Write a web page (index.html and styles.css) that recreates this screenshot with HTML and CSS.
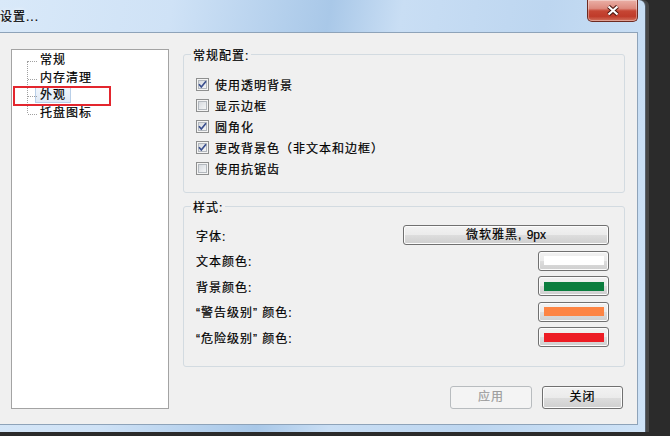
FILE: index.html
```html
<!DOCTYPE html>
<html lang="zh-CN">
<head>
<meta charset="utf-8">
<title>设置...</title>
<link rel="stylesheet" href="styles.css">
</head>
<body>
<div class="window">
  <div class="titlebar">
    <span class="title">设置...</span>
    <button class="close" aria-label="关闭">
      <svg width="14" height="11" viewBox="0 0 14 11">
        <path d="M2.5 1.5 L11.5 9.5 M11.5 1.5 L2.5 9.5" stroke="#4a1710" stroke-width="4.2" fill="none"/>
        <path d="M2.5 1.5 L11.5 9.5 M11.5 1.5 L2.5 9.5" stroke="#ffffff" stroke-width="2.2" fill="none"/>
      </svg>
    </button>
  </div>
  <div class="client">
    <div class="tree">
      <ul class="tree-list">
        <li>常规</li>
        <li>内存清理</li>
        <li><span class="selected">外观</span></li>
        <li>托盘图标</li>
      </ul>
      <div class="annotation"></div>
    </div>
    <div class="panel">
      <fieldset class="group group-general">
        <legend>常规配置:</legend>
        <div class="check"><span class="cb"><svg class="tick" width="11" height="11" viewBox="0 0 11 11"><path d="M2 5.3 L4.3 8 L9 2.3" stroke="#3a4f8e" stroke-width="1.7" fill="none"/></svg></span>使用透明背景</div>
        <div class="check"><span class="cb"></span>显示边框</div>
        <div class="check"><span class="cb"><svg class="tick" width="11" height="11" viewBox="0 0 11 11"><path d="M2 5.3 L4.3 8 L9 2.3" stroke="#3a4f8e" stroke-width="1.7" fill="none"/></svg></span>圆角化</div>
        <div class="check"><span class="cb"><svg class="tick" width="11" height="11" viewBox="0 0 11 11"><path d="M2 5.3 L4.3 8 L9 2.3" stroke="#3a4f8e" stroke-width="1.7" fill="none"/></svg></span>更改背景色（非文本和边框）</div>
        <div class="check"><span class="cb"></span>使用抗锯齿</div>
      </fieldset>
      <fieldset class="group group-style">
        <legend>样式:</legend>
        <div class="row"><span>字体:</span><button class="btn font-btn">微软雅黑, <span class="latin">9px</span></button></div>
        <div class="row"><span>文本颜色:</span><button class="btn color-btn"><span class="swatch white"></span></button></div>
        <div class="row"><span>背景颜色:</span><button class="btn color-btn"><span class="swatch green"></span></button></div>
        <div class="row"><span>“警告级别” 颜色:</span><button class="btn color-btn"><span class="swatch orange"></span></button></div>
        <div class="row"><span>“危险级别” 颜色:</span><button class="btn color-btn"><span class="swatch red"></span></button></div>
      </fieldset>
      <div class="actions">
        <button class="btn action apply" disabled>应用</button>
        <button class="btn action close-btn">关闭</button>
      </div>
    </div>
  </div>
</div>
</body>
</html>
```
FILE: styles.css
```css
html, body {
  margin: 0;
  padding: 0;
}

body {
  width: 670px;
  height: 436px;
  overflow: hidden;
  background: #2b2b2b;
  font-family: "Liberation Sans", "Noto Sans CJK SC", sans-serif;
  font-size: 12px;
  letter-spacing: 1px;
  color: #000;
  -webkit-text-stroke: 0.2px currentColor;
}

.window {
  width: 645px;
  height: 432px;
  display: flex;
  flex-direction: column;
  background: linear-gradient(100deg, #d9e9f9 0%, #cfe2f6 24%, #b3cfec 40%, #a9c8e8 46%, #c9def4 56%, #bdd6f0 76%, #cfe3f7 100%);
  border-top-right-radius: 6px;
  box-shadow: 1px 0 0 #56606c, 4px 0 0 #474747;
}

.titlebar {
  flex: none;
  height: 32px;
  display: flex;
  align-items: flex-start;
}

.title {
  margin: 10px 0 0 0;
  line-height: 14px;
  text-shadow: 0 0 5px rgba(255, 255, 255, 0.8);
}

.close {
  margin-left: auto;
  margin-right: 7px;
  width: 51px;
  height: 22px;
  padding: 0;
  border: 1px solid #6d2a21;
  border-top: none;
  border-radius: 0 0 5px 5px;
  background: linear-gradient(#eab0a6 0%, #dd8a7e 40%, #c64634 52%, #bf3b2a 78%, #d2735f 100%);
  box-shadow: inset 0 0 0 1px rgba(255, 255, 255, 0.35);
  display: flex;
  align-items: center;
  justify-content: center;
}

.close svg {
  display: block;
}

.client {
  flex: none;
  height: 393px;
  margin-right: 7px;
  box-sizing: border-box;
  background: #f0f0f0;
  border: 1px solid #8ea3b9;
  border-left: none;
  display: flex;
  align-items: flex-start;
}

/* tree view */
.tree {
  position: relative;
  flex: none;
  margin: 16px 0 0 11px;
  width: 158px;
  height: 360px;
  box-sizing: border-box;
  border: 1px solid #a3a3a3;
  background: #fff;
}

.tree-list {
  position: relative;
  list-style: none;
  margin: 0;
  padding: 2px 0 0;
}

.tree-list::before {
  content: "";
  position: absolute;
  left: 15px;
  top: 11px;
  height: 52px;
  border-left: 1px dotted #a0a0a0;
}

.tree-list li {
  position: relative;
  height: 17.5px;
  line-height: 17.5px;
  padding-left: 28px;
}

.tree-list li::before {
  content: "";
  position: absolute;
  left: 16px;
  top: 9px;
  width: 9px;
  border-top: 1px dotted #a0a0a0;
}

.selected {
  display: inline-block;
  margin-left: -5px;
  padding: 0 4px;
  line-height: 14px;
  border: 1px solid #b9cfe8;
  background: linear-gradient(#f1f6fc, #dfe9f6);
}

.annotation {
  position: absolute;
  left: 1px;
  top: 36px;
  width: 98px;
  height: 20px;
  box-sizing: border-box;
  border: 2px solid #e3262e;
}

/* right panel */
.panel {
  flex: none;
  width: 442px;
  margin: 13px 0 0 14px;
  display: flex;
  flex-direction: column;
}

.group {
  margin: 0;
  min-width: 0;
  box-sizing: border-box;
  border: 1px solid #d3dbe1;
  border-radius: 3px;
}

.group legend {
  margin-left: -5px;
  padding: 4px 2px 0;
  line-height: 12px;
}

.group-general {
  height: 147px;
  padding: 12px 15px 0 12px;
}

.check {
  display: flex;
  align-items: center;
  height: 21px;
}

.cb {
  flex: none;
  width: 13px;
  height: 13px;
  margin-right: 6px;
  box-sizing: border-box;
  border: 1px solid #8e8f8f;
  background: linear-gradient(135deg, #cfd3d9 0%, #eef0f2 70%, #f8f8f8 100%);
  box-shadow: inset 0 0 0 1px #f4f4f4, inset 0 0 0 2px #b3b8be;
  display: flex;
}

.tick {
  display: block;
}

.group-style {
  height: 169px;
  margin-top: 5px;
  padding: 11px 15px 0 12px;
}

.row {
  display: flex;
  justify-content: space-between;
  align-items: center;
  height: 20px;
}

.row + .row {
  margin-top: 5.5px;
}

.btn {
  font: inherit;
  letter-spacing: inherit;
  color: #000;
  padding: 0;
  box-sizing: border-box;
  border: 1px solid #707070;
  border-radius: 3px;
  background: linear-gradient(#f2f2f2 0%, #ebebeb 50%, #dddddd 51%, #cfcfcf 100%);
  box-shadow: inset 0 0 0 1px #fcfcfc;
}

.font-btn {
  width: 206px;
  height: 20px;
  line-height: 16px;
}

.latin {
  letter-spacing: 0;
}

.color-btn {
  width: 71px;
  height: 20px;
  display: flex;
  align-items: center;
  justify-content: center;
}

.swatch {
  display: block;
  width: 60px;
  height: 9px;
}

.swatch.white { background: #ffffff; }
.swatch.green { background: #0b7d3e; }
.swatch.orange { background: #fd8443; }
.swatch.red { background: #ed1c24; }

.actions {
  display: flex;
  justify-content: flex-end;
  gap: 10px;
  margin-top: 19px;
  padding-right: 2px;
}

.action {
  height: 23px;
  line-height: 19px;
}

.apply {
  width: 82px;
  color: #9c9c9c;
  border-color: #b8bcbf;
  background: #f4f4f4;
  box-shadow: none;
}

.close-btn {
  width: 81px;
}
```
